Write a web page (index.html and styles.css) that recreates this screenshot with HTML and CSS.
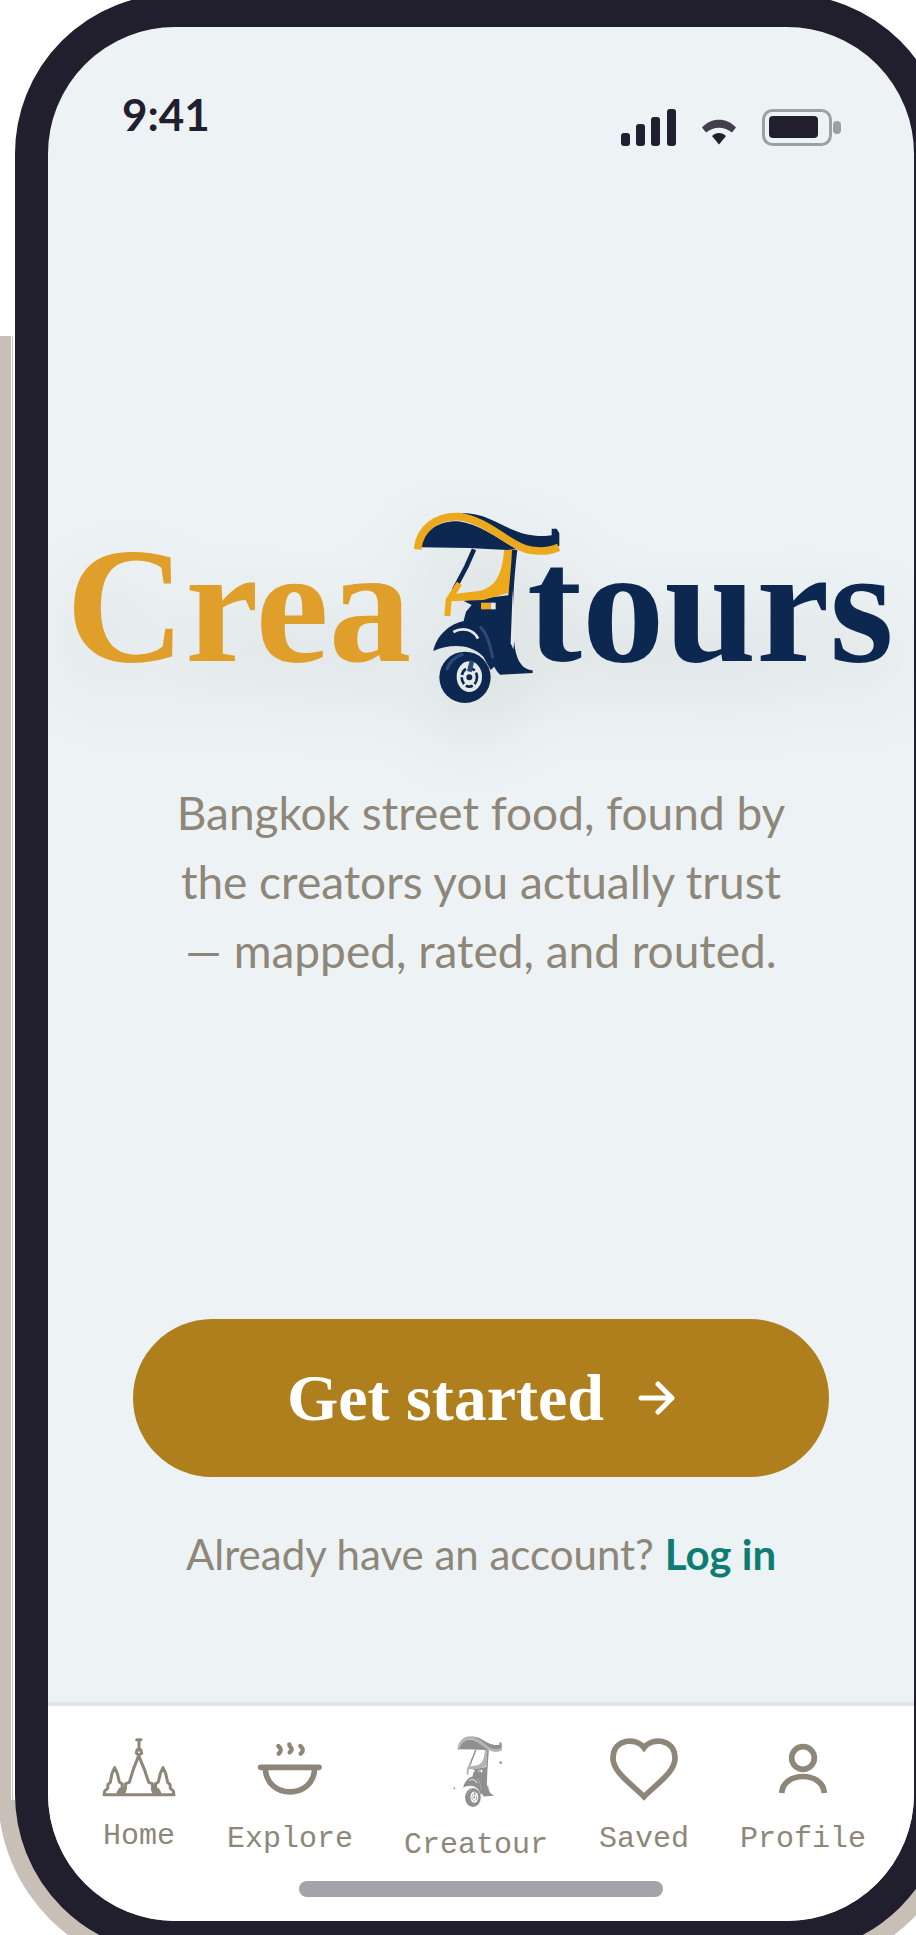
FILE: index.html
```html
<!DOCTYPE html>
<html lang="en">
<head>
    <meta charset="utf-8">
    <title>Creatours</title>
    <meta name="viewport" content="width=device-width">
    <link rel="stylesheet" href="styles.css">
</head>
<body>
    <svg class="defs" aria-hidden="true">
        <symbol id="tuktuk" viewBox="42 66 438 576" preserveAspectRatio="none">
            <!-- roof -->
            <path class="tk-body" d="M62 172C72 122 115 92 175 94C235 102 290 142 350 178L320 180L205 174Z"/>
            <path class="tk-body" d="M185 70C250 68 290 100 340 120C385 140 430 140 455 136L455 116L470 116L478 130L478 168C430 182 385 176 340 152C295 125 250 90 185 76Z"/>
            <path class="tk-trim-line" d="M53 178C58 115 110 78 175 80C245 88 295 135 345 162C385 188 440 188 476 172" stroke-width="23"/>
            <!-- windscreen -->
            <path class="tk-body-line" d="M222 178L200 228L162 300" stroke-width="14"/>
            <path class="tk-trim-line" d="M178 280L146 330L142 378" stroke-width="18"/>
            <!-- cab -->
            <path class="tk-body" d="M330 180H352C340 280 332 410 348 490C358 528 378 540 398 541V549L300 554C272 530 272 480 262 440C250 405 220 398 190 396L198 365L215 345L190 332L325 316Z"/>
            <path class="tk-trim" d="M312 180H336C334 230 328 280 326 308L250 330L148 334L160 312L236 303C290 293 308 245 312 180Z"/>
            <path class="tk-shine" d="M338 300L332 460L340 478L344 440Z"/>
            <path class="tk-trim" d="M243 338H272V358H243Z"/>
            <path class="tk-shine" d="M272 338H287V358H272Z"/>
            <!-- fender and wheel -->
            <path class="tk-body" d="M100 483C108 435 160 385 222 392C262 402 275 450 292 522L272 540L250 500C210 460 150 462 100 483Z"/>
            <ellipse class="tk-body" cx="195" cy="562" rx="77" ry="77"/>
            <path class="tk-glow" d="M240 410C262 430 272 470 278 505M140 540C148 515 165 500 190 492" stroke-width="9"/>
            <path class="tk-shine-line" d="M160 426C190 410 222 420 234 446" stroke-width="8"/>
            <ellipse class="tk-shine" cx="208" cy="560" rx="38" ry="46"/>
            <ellipse class="tk-body-line" cx="208" cy="562" rx="23" ry="28" stroke-width="8" stroke-dasharray="22 7"/>
            <path class="tk-glow" d="M216 512L208 545" stroke-width="14"/>
            <circle class="tk-body" cx="208" cy="562" r="9"/>
        </symbol>
    </svg>

    <div class="phone">
        <div class="status-bar">
            <div class="time">9:41</div>
            <div class="status-icons">
                <svg width="55" height="37" viewBox="0 0 55 37">
                    <rect x="0" y="24" width="9" height="13" rx="3"/>
                    <rect x="15" y="15" width="9" height="22" rx="3"/>
                    <rect x="30" y="8" width="9" height="29" rx="3"/>
                    <rect x="46" y="0" width="9" height="37" rx="3"/>
                </svg>
                <svg width="34" height="37" viewBox="0 0 34 37">
                    <path opacity=".85" d="M0 18.500C9 8 25 8 34 18.500L30 23.500C22 17 12 17 4 23.500Z"/>
                    <path d="M10 27C14 23 20 23 24 27L17 35.500Z"/>
                </svg>
                <svg width="79" height="37" viewBox="0 0 79 37">
                    <rect class="battery-shell" x="1.500" y="1.500" width="67" height="34" rx="9"/>
                    <rect x="7" y="7" width="49" height="22" rx="4"/>
                    <rect class="battery-tip" x="71" y="12" width="8" height="13" rx="4"/>
                </svg>
            </div>
        </div>

        <div class="main">
            <svg class="logo" viewBox="0 0 866 200" role="img" aria-label="Creatours">
                <text class="logo-crea" x="18" y="151">Crea</text>
                <text class="logo-tours" x="479" y="151">tours</text>
                <use href="#tuktuk" x="366" y="2" width="146" height="192"/>
            </svg>

            <p class="slogan">Bangkok street food, found by the creators you actually trust — mapped, rated, and routed.</p>

            <div class="actions">
                <button type="button" class="btn">
                    Get started
                    <svg width="37" height="34" viewBox="0 0 37 34">
                        <path d="M3 17H34M20 3L34 17L20 31"/>
                    </svg>
                </button>
                <div class="login">Already have an account? <a href="#login">Log in</a></div>
            </div>
        </div>

        <div class="footer">
            <nav class="tabs">
                <a class="tab" href="#home">
                    <svg width="74" height="69" viewBox="66 102 222 207">
                        <g class="line-home">
                            <path d="M72 284H282"/>
                            <path d="M73 282L74 273L83 265L84 253L91 247L96 220L104 203L112 220L118 246L127 252L126 262L136 268L132 278H114L120 268L132 272"/>
                            <path d="M281 282L280 273L271 265L270 253L263 247L257 220L249 203L241 220L235 246L226 252L227 262L217 268L221 278H239L233 268L221 272"/>
                            <path d="M136 264L137 251L148 247L160 208L176 167L193 208L206 247L217 251L218 264"/>
                            <path d="M170 119H183M177 119V150M171 150L169 160L177 165L185 160L183 150L177 146Z"/>
                        </g>
                    </svg>
                    <span>Home</span>
                </a>
                <a class="tab" href="#explore">
                    <svg width="72" height="72" viewBox="534 102 216 216">
                        <path class="line" stroke-linecap="round" d="M554 202H729"/>
                        <path class="line" d="M568 206C572 299 712 299 716 206"/>
                        <path class="steam" d="M607 138Q621 150 608 161M640 133Q640 138 645 143Q650 150 641 157M673 138Q687 150 674 161"/>
                    </svg>
                    <span>Explore</span>
                </a>
                <a class="tab" href="#creatour">
                    <svg class="tuktuk-grey" width="78" height="78" viewBox="177 102 234 234">
                        <use href="#tuktuk" x="238" y="108" width="134" height="214"/>
                        <circle cx="368" cy="188" r="4"/>
                        <circle cx="229" cy="265" r="3"/>
                    </svg>
                    <span>Creatour</span>
                </a>
                <a class="tab" href="#saved">
                    <svg width="72" height="72" viewBox="0 0 216 216">
                        <path class="line" d="M108 41C86 10 15 12 15 73C15 114 66 146 108 188C150 146 201 114 201 73C201 12 130 10 108 41Z"/>
                    </svg>
                    <span>Saved</span>
                </a>
                <a class="tab" href="#profile">
                    <svg width="72" height="72" viewBox="376 102 216 216">
                        <circle class="line" cx="484" cy="174" r="34"/>
                        <path class="line" d="M420 279C424 213 544 213 548 279"/>
                    </svg>
                    <span>Profile</span>
                </a>
            </nav>
            <div class="home-bar"></div>
        </div>
    </div>
</body>
</html>
```
FILE: styles.css
```css
html {
    height: 100%;
    overflow: hidden;
    background: #fff;
}
body {
    height: 100%;
    margin: 0;
    overflow: hidden;
    position: relative;
    z-index: 0;
    font-family: Lato, "Liberation Sans", sans-serif;
    color: #8e8779;
}
a {
    color: inherit;
    text-decoration: none;
}
.defs {
    position: absolute;
    width: 0;
    height: 0;
}

/* phone frame, runs off the top, right and bottom of the window */
.phone {
    position: relative;
    box-sizing: border-box;
    display: flex;
    flex-direction: column;
    min-height: calc(100% + 25px);
    margin: -6px -31px 0 15px;
    border: 33px solid #211f2d;
    border-radius: 160px;
    background: #edf3f4;
    background-clip: padding-box;
}
.phone:before {
    content: "";
    position: absolute;
    z-index: -1;
    top: 309px;
    right: -50px;
    bottom: -50px;
    left: -50px;
    border-radius: 0 0 177px 177px;
    background: linear-gradient(90deg, transparent 13px, #fff 13px, #fff 14px, #c8bfb7 14px, #c8bfb7 15px, #fff 15px, #fff 17px, transparent 17px) 0 0 / 100% 1464px no-repeat, #c8bfb7;
}

.status-bar {
    display: flex;
    justify-content: space-between;
    align-items: flex-end;
    padding: 56px 73px 0 74px;
}
.time {
    font-size: 44px;
    line-height: 63px;
    font-weight: bold;
    color: #211f2d;
}
.status-icons {
    display: flex;
    gap: 26px;
    fill: #211f2d;
}
.battery-shell {
    fill: none;
    stroke: #9c9fa3;
    stroke-width: 3;
}
.battery-tip {
    fill: #9c9fa3;
}

.main {
    flex: 1;
    display: flex;
    flex-direction: column;
    align-items: center;
    overflow: hidden;
}
.logo {
    display: block;
    width: 100%;
    margin-top: 364px;
    overflow: visible;
    filter: drop-shadow(0 30px 36px rgba(40, 40, 40, 0.12));
}
.logo text {
    font-family: "Liberation Serif", serif;
    font-size: 165px;
    font-weight: bold;
}
.logo-crea {
    fill: #e09e2b;
}
.logo-tours {
    fill: #0d2850;
}

.tk-body {
    fill: var(--tk-body, #0d2850);
}
.tk-trim {
    fill: var(--tk-trim, #eda91c);
}
.tk-shine {
    fill: var(--tk-shine, #e6eaea);
}
.tk-body-line,
.tk-trim-line,
.tk-shine-line,
.tk-glow {
    fill: none;
}
.tk-body-line {
    stroke: var(--tk-body, #0d2850);
}
.tk-trim-line {
    stroke: var(--tk-trim, #eda91c);
}
.tk-shine-line {
    stroke: var(--tk-shine, #e6eaea);
}
.tk-glow {
    stroke: var(--tk-glow, #2a4a78);
}
.tuktuk-grey {
    --tk-body: #8f8f8f;
    --tk-trim: #b4b4b4;
    --tk-shine: #fff;
    --tk-glow: #aaa;
    fill: #999;
}

.slogan {
    max-width: 624px;
    margin: 68px 0 0;
    font-size: 46px;
    line-height: 69px;
    text-align: center;
}
.actions {
    box-sizing: border-box;
    width: 100%;
    margin-top: auto;
    padding: 40px 85px 118px;
    text-align: center;
}
.btn {
    display: flex;
    justify-content: center;
    align-items: center;
    gap: 34px;
    width: 100%;
    height: 158px;
    padding: 0;
    border: 0;
    border-radius: 79px;
    background: #ae7f1c;
    color: #fff;
    font-family: "Liberation Serif", serif;
    font-size: 66px;
    font-weight: bold;
    cursor: pointer;
}
.btn path {
    fill: none;
    stroke: #fff;
    stroke-width: 5;
    stroke-linecap: round;
    stroke-linejoin: round;
}
.login {
    margin-top: 47px;
    font-size: 42px;
    line-height: 60px;
}
.login a {
    font-weight: bold;
    color: #0f7c73;
}

.footer {
    padding: 28px 0 24px;
    border-top: 4px solid #dfe5e4;
    border-radius: 0 0 127px 127px;
    background: #fff;
}
.tabs {
    display: flex;
    justify-content: space-between;
    padding: 0 48px 0 54px;
}
.tab {
    display: flex;
    flex-direction: column;
    align-items: center;
    gap: 16px;
    font-family: "Liberation Mono", monospace;
    font-size: 30px;
    line-height: 35px;
}
.line,
.line-home,
.steam {
    fill: none;
    stroke: #8e8779;
    stroke-width: 17;
}
.line-home {
    stroke-width: 9;
    stroke-linecap: round;
    stroke-linejoin: round;
}
.steam {
    stroke-width: 13;
    stroke-linecap: round;
}
.home-bar {
    width: 364px;
    height: 16px;
    margin: 18px auto 0;
    border-radius: 8px;
    background: #a5a3aa;
}
```
